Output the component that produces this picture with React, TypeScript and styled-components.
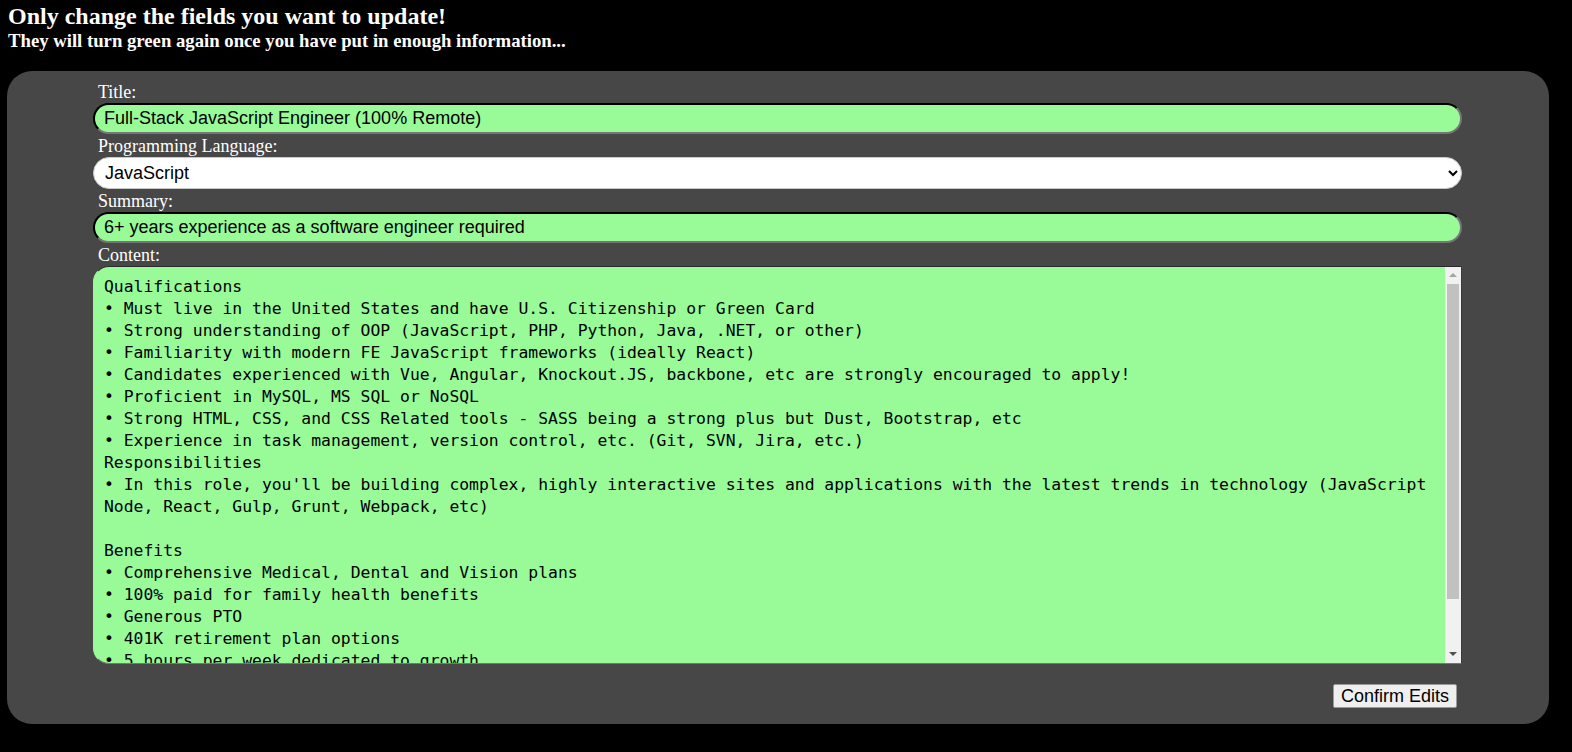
import React, { FC, useState } from 'react';
import styled, { createGlobalStyle } from 'styled-components';

const GlobalStyle = createGlobalStyle`
  html, body {
    margin: 0;
    padding: 0;
    background-color: #000;
  }
  body {
    font-family: "Liberation Serif", "Times New Roman", serif;
    color: #fff;
  }
`;

const StyledHeader = styled.header`
  padding: 3px 8px 0;
`;

const StyledHeading = styled.h2`
  margin: 0;
  font-size: 24px;
  font-weight: bold;
`;

const StyledSubHeading = styled.h3`
  margin: 0 0 18.72px;
  font-size: 18.72px;
  font-weight: bold;
`;

const StyledPanel = styled.form`
  box-sizing: border-box;
  width: 1542px;
  margin-left: 7px;
  padding: 9px 0 16px 86px;
  background-color: #474747;
  border-radius: 25px;
  display: flex;
  flex-direction: column;
`;

const StyledFields = styled.div`
  width: 1369px;
  display: flex;
  flex-direction: column;
`;

const StyledLabel = styled.label`
  display: block;
  padding: 1px 0 0 5px;
  line-height: 22px;
  font-size: 18px;
  color: #fff;
`;

const StyledInput = styled.input<{ $valid?: boolean }>`
  box-sizing: border-box;
  width: 100%;
  height: 31px;
  margin: 0;
  padding: 0 9px;
  font-family: "Liberation Sans", Arial, sans-serif;
  font-size: 18px;
  color: #000;
  background-color: ${(p) => (p.$valid ? '#98fb98' : '#fff')};
  border-width: 2px;
  border-style: inset;
  border-color: #2a2a2a #767676 #767676 #2a2a2a;
  border-radius: 16px;
  outline: none;
`;

const StyledSelect = styled.select`
  box-sizing: border-box;
  width: 100%;
  height: 32px;
  margin: 0;
  padding: 0 7px;
  font-family: "Liberation Sans", Arial, sans-serif;
  font-size: 18px;
  color: #000;
  background-color: #fff;
  border: 1px solid #c8c8c8;
  border-radius: 16px;
  outline: none;
`;

const StyledEditor = styled.div`
  box-sizing: border-box;
  display: flex;
  height: 398px;
  border: 1px solid;
  border-color: #2a2a2a #3a3a3a #767676 #98fb98;
  border-radius: 16px 0 0 16px;
  overflow: hidden;
  background-color: #98fb98;
`;

const StyledTextArea = styled.textarea`
  box-sizing: border-box;
  flex: 1;
  min-width: 0;
  height: 100%;
  margin: 0;
  padding: 9px 7px 8px 10px;
  font-family: "DejaVu Sans Mono", monospace;
  font-size: 16.4px;
  line-height: 22px;
  color: #000;
  background-color: transparent;
  border: none;
  resize: none;
  outline: none;
  overflow: hidden;
`;

const StyledScrollbar = styled.div`
  width: 16px;
  display: flex;
  flex-direction: column;
  background-color: #f1f1f1;
`;

const StyledScrollButton = styled.div<{ $down?: boolean }>`
  height: 17px;
  display: flex;
  align-items: center;
  justify-content: center;

  &::after {
    content: '';
    width: 0;
    height: 0;
    border-left: 4px solid transparent;
    border-right: 4px solid transparent;
    ${(p) =>
      p.$down ? 'border-top: 4px solid #505050;' : 'border-bottom: 4px solid #a3a3a3;'}
  }
`;

const StyledScrollTrack = styled.div`
  flex: 1;
  padding: 0 2px;
`;

const StyledScrollThumb = styled.div`
  height: 315px;
  background-color: #c1c1c1;
`;

const StyledFooter = styled.div`
  display: flex;
  justify-content: flex-end;
  width: 1369px;
  margin-top: 20px;
`;

const StyledButton = styled.button`
  box-sizing: border-box;
  height: 24px;
  margin-right: 5px;
  padding: 0 7px;
  font-family: "Liberation Sans", Arial, sans-serif;
  font-size: 18px;
  line-height: 20px;
  color: #000;
  background-color: #efefef;
  border: 1px solid #9a9a9a;
  border-radius: 2px;
`;

const CONTENT = [
  'Qualifications',
  '• Must live in the United States and have U.S. Citizenship or Green Card',
  '• Strong understanding of OOP (JavaScript, PHP, Python, Java, .NET, or other)',
  '• Familiarity with modern FE JavaScript frameworks (ideally React)',
  '• Candidates experienced with Vue, Angular, Knockout.JS, backbone, etc are strongly encouraged to apply!',
  '• Proficient in MySQL, MS SQL or NoSQL',
  '• Strong HTML, CSS, and CSS Related tools - SASS being a strong plus but Dust, Bootstrap, etc',
  '• Experience in task management, version control, etc. (Git, SVN, Jira, etc.)',
  'Responsibilities',
  "• In this role, you'll be building complex, highly interactive sites and applications with the latest trends in technology (JavaScript Node, React, Gulp, Grunt, Webpack, etc)",
  '',
  'Benefits',
  '• Comprehensive Medical, Dental and Vision plans',
  '• 100% paid for family health benefits',
  '• Generous PTO',
  '• 401K retirement plan options',
  '• 5 hours per week dedicated to growth',
  '• Flexible working hours',
  '• Home office stipend'
].join('\n');

const App: FC = () => {
  const [title, setTitle] = useState('Full-Stack JavaScript Engineer (100% Remote)');
  const [language, setLanguage] = useState('JavaScript');
  const [summary, setSummary] = useState('6+ years experience as a software engineer required');
  const [content, setContent] = useState(CONTENT);

  return (
    <>
      <GlobalStyle />
      <StyledHeader>
        <StyledHeading>Only change the fields you want to update!</StyledHeading>
        <StyledSubHeading>They will turn green again once you have put in enough information...</StyledSubHeading>
      </StyledHeader>
      <StyledPanel onSubmit={(e) => e.preventDefault()}>
        <StyledFields>
          <StyledLabel htmlFor="title">Title:</StyledLabel>
          <StyledInput
            id="title"
            $valid={title.length > 5}
            value={title}
            onChange={(e) => setTitle(e.target.value)}
          />
          <StyledLabel htmlFor="language">Programming Language:</StyledLabel>
          <StyledSelect id="language" value={language} onChange={(e) => setLanguage(e.target.value)}>
            <option>JavaScript</option>
            <option>Python</option>
            <option>Java</option>
            <option>C#</option>
            <option>PHP</option>
            <option>Ruby</option>
          </StyledSelect>
          <StyledLabel htmlFor="summary">Summary:</StyledLabel>
          <StyledInput
            id="summary"
            $valid={summary.length > 5}
            value={summary}
            onChange={(e) => setSummary(e.target.value)}
          />
          <StyledLabel htmlFor="content">Content:</StyledLabel>
          <StyledEditor>
            <StyledTextArea id="content" value={content} onChange={(e) => setContent(e.target.value)} />
            <StyledScrollbar>
              <StyledScrollButton />
              <StyledScrollTrack>
                <StyledScrollThumb />
              </StyledScrollTrack>
              <StyledScrollButton $down />
            </StyledScrollbar>
          </StyledEditor>
        </StyledFields>
        <StyledFooter>
          <StyledButton type="submit">Confirm Edits</StyledButton>
        </StyledFooter>
      </StyledPanel>
    </>
  );
};

export default App;
